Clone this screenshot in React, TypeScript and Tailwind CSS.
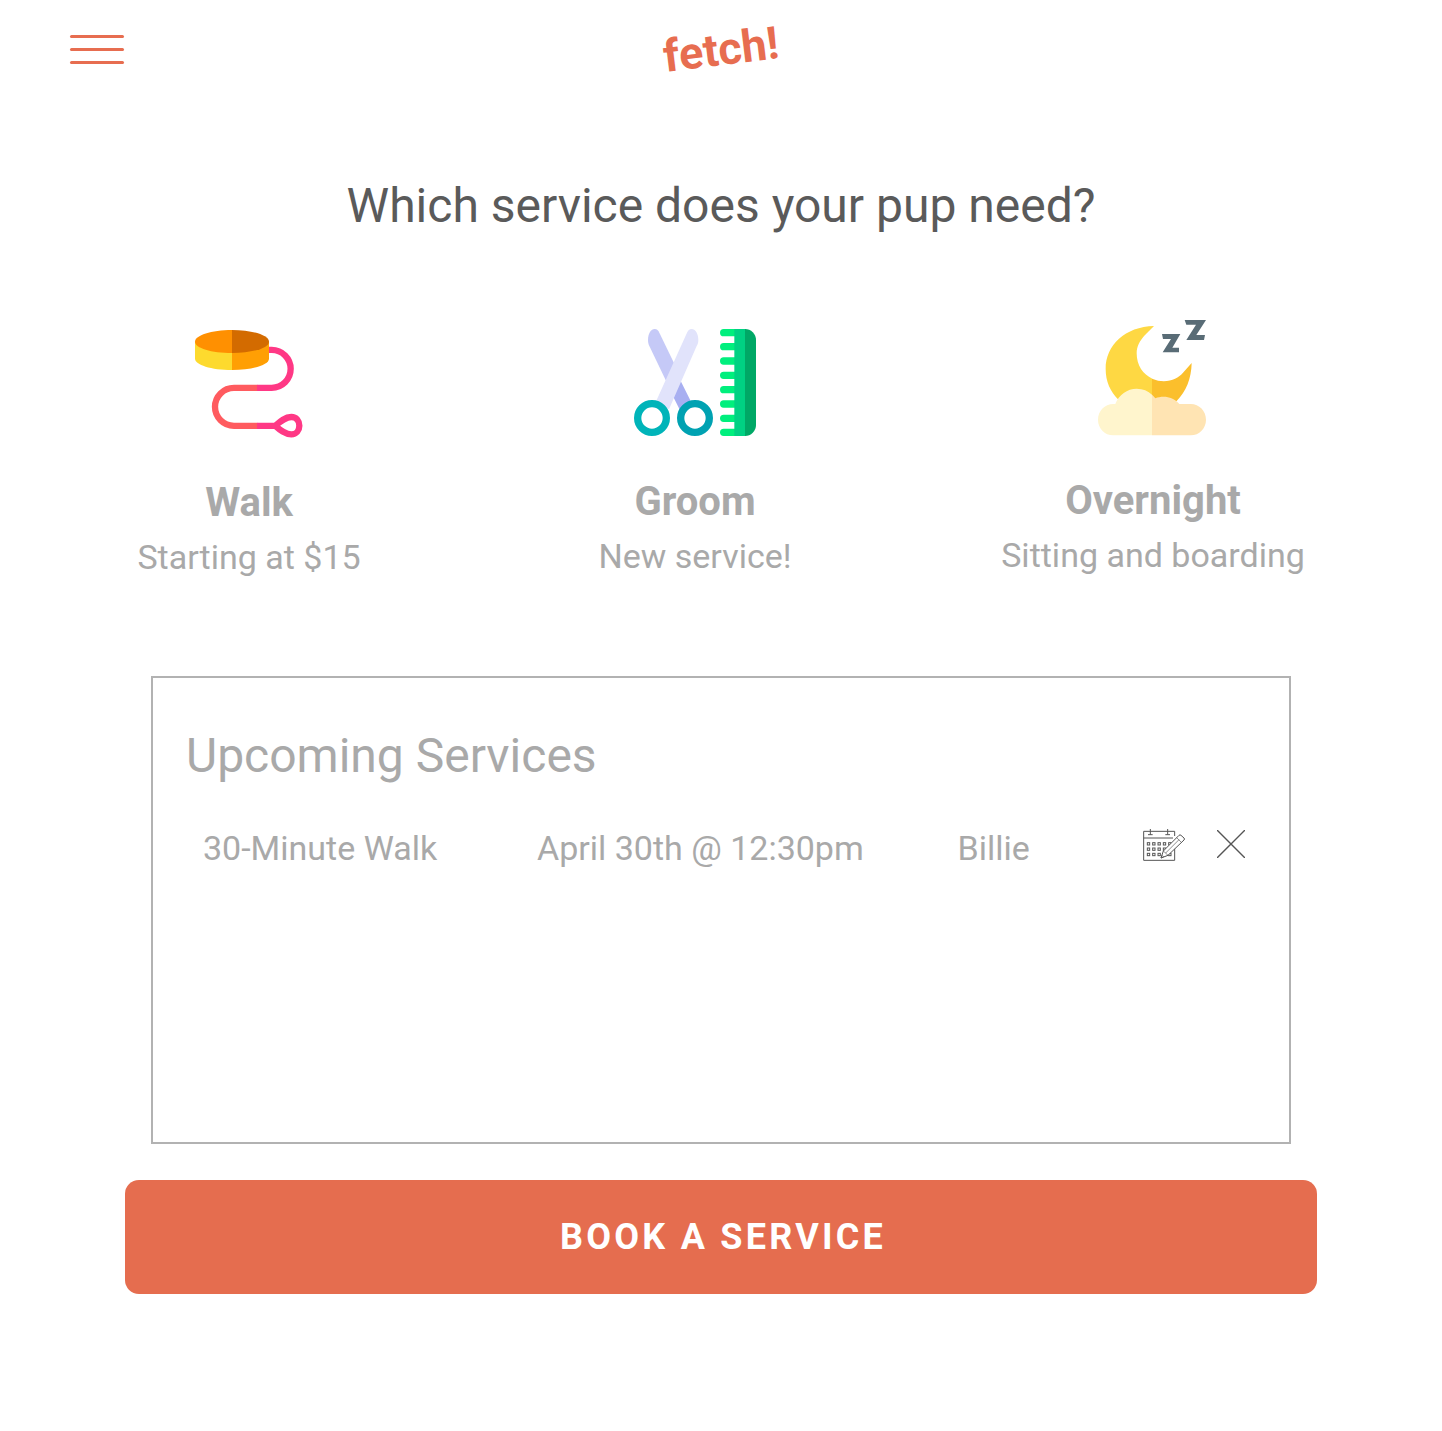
import type { ReactNode } from "react";

function LeashIcon() {
  return (
    <svg viewBox="42 15 333 354" className="h-[118px] w-[111px]" aria-hidden="true">
      <g fill="none" strokeWidth="19">
        <path d="M232 332.500H162a57 57 0 0 1 0-114h70" stroke="#ff5b5f" />
        <path d="M231 218.500h44a57 57 0 0 0 0-114h-16" stroke="#ff3885" />
        <path
          d="M231 332.500h55C300 320 315 306 334 306c15 0 24 12 24 26s-9 26-24 26c-19 0-34-13-48-25.500"
          stroke="#ff3885"
        />
      </g>
      <path d="M45 80v51c0 18 48 34 111 34l20-42-20-43z" fill="#fdda2e" />
      <path d="M267 80v51c0 18-48 34-111 34V80z" fill="#ff9f04" />
      <path d="M156 45C94 45 45 61 45 80s49 34 111 34l16-34z" fill="#ff9001" />
      <path d="M156 45c62 0 111 16 111 35s-49 34-111 34z" fill="#d36b00" />
    </svg>
  );
}

function GroomIcon() {
  const teeth = [42, 84, 127, 170, 213, 256, 299, 341];
  return (
    <svg viewBox="42 15 366 351" className="h-[117px] w-[122px]" aria-hidden="true">
      <path d="M84 74c0-18 9-32 20-32 7 0 11 5 14 11l45 93-25 51-50-104c-3-7-4-12-4-19z" fill="#c5c9f7" />
      <path d="M181 196l33 66-34 24-24-48z" fill="#a8aff1" />
      <path d="M235 74c0-18-9-32-20-32-7 0-11 5-14 11l-92 204 38 26 83-190c4-7 5-12 5-19z" fill="#e1e3fb" />
      <circle cx="96" cy="309" r="43" fill="#fff" stroke="#00b4b9" strokeWidth="22" />
      <circle cx="225" cy="309" r="43" fill="#fff" stroke="#00a2b2" strokeWidth="22" />
      {teeth.map((y) => (
        <path key={y} d={`M346 ${y}h-35a11 11 0 0 0 0 22h35z`} fill="#00ef7d" />
      ))}
      <path d="M343 42h34v321h-34z" fill="#00d183" />
      <path d="M375 42a33 33 0 0 1 33 33v255a33 33 0 0 1-33 33z" fill="#00a866" />
    </svg>
  );
}

function MoonIcon() {
  return (
    <svg viewBox="39 30 330 348" className="h-[116px] w-[110px]" aria-hidden="true">
      <path
        d="M207 48C121 50 62 105 62 177c0 38 14 67 37 91l60 30 43-30V206c-28-12-47-40-47-76 0-21 10-39 25-55z"
        fill="#fed843"
      />
      <path d="M201 206c41 17 76 2 93-18l26-29c-1 48-17 86-45 114l-40 20-34-25z" fill="#fbbf2c" />
      <path
        d="M201 376H85c-26 0-46-21-46-47s20-47 46-47h6c10-28 36-46 64-46 19 0 34 6 46 18z"
        fill="#fff5cd"
      />
      <path
        d="M201 254c4 3 7 7 10 11 24-9 53-5 72 17h34c26 0 46 21 46 47s-20 47-46 47H201z"
        fill="#ffe4b3"
      />
      <path
        d="M299 30h64l-29 45h26l-3 15h-53l29-46h-29zM231 72h55l-24 41h20v14h-49l25-40h-24z"
        fill="#596c76"
      />
    </svg>
  );
}

function CalendarIcon() {
  const columns = [52, 68, 84, 100, 116];
  const rows = [80, 96, 112];
  return (
    <svg viewBox="39 36 126 99" className="h-[33px] w-[42px]" aria-hidden="true">
      <g fill="none" stroke="#555" strokeWidth="3">
        <path d="M134 80v53H41V46h93v14M41 66h88M61 39v17M113 39v17M54 56h14M106 56h14" />
        {rows.map((y) =>
          columns.map((x) => <rect key={`${x}-${y}`} x={x} y={y} width="7" height="7" />),
        )}
      </g>
      <path
        d="M93 126l7-21 47-47q3-3 6 0l9 8q3 3 0 6l-48 46z"
        fill="#fff"
        stroke="#555"
        strokeWidth="3"
      />
      <path d="M100 105l14 13M140 65l14 14M107 111l40-40M93 126l8-3-5-5z" fill="none" stroke="#555" strokeWidth="2" />
    </svg>
  );
}

function CloseIcon() {
  return (
    <svg viewBox="0 0 28 28" className="size-7" aria-hidden="true">
      <path d="M0 0l28 28M28 0L0 28" stroke="#555" strokeWidth="1.400" />
    </svg>
  );
}

type Service = { name: string; note: string; icon: ReactNode };

const services: Service[] = [
  { name: "Walk", note: "Starting at $15", icon: <LeashIcon /> },
  { name: "Groom", note: "New service!", icon: <GroomIcon /> },
  { name: "Overnight", note: "Sitting and boarding", icon: <MoonIcon /> },
];

const bookings = [{ service: "30-Minute Walk", time: "April 30th @ 12:30pm", pup: "Billie" }];

export default function App() {
  return (
    <div className="min-h-screen bg-white pb-12 font-['Roboto',sans-serif] text-[#a9a9a9]">
      <header className="grid h-[98px] grid-cols-3 items-center px-[70px]">
        <button type="button" aria-label="Open menu" className="flex w-[54px] flex-col gap-[10px]">
          <span className="h-[3px] rounded-full bg-[#e76d50]" />
          <span className="h-[3px] rounded-full bg-[#e76d50]" />
          <span className="h-[3px] rounded-full bg-[#e76d50]" />
        </button>
        <a href="#home" className="-rotate-7 justify-self-center text-[45px] leading-none font-bold text-[#e76d50]">
          fetch!
        </a>
      </header>

      <main>
        <h1 className="mt-20 text-center text-[48px] leading-14 text-[#5a5a5a]">
          Which service does your pup need?
        </h1>

        <section
          aria-label="Services"
          className="mt-[86px] grid grid-cols-[446fr_446fr_470fr] items-start pr-[54px] pl-[26px]"
        >
          {services.map(({ name, note, icon }) => (
            <button key={name} type="button" className="flex flex-col items-center">
              {icon}
              <span className="mt-[41px] text-[40px] leading-12 font-bold">{name}</span>
              <span className="mt-[10px] text-[34px] leading-10">{note}</span>
            </button>
          ))}
        </section>

        <section
          aria-labelledby="upcoming"
          className="mx-[151px] mt-[99px] min-h-[468px] border-2 border-[#b2b2b2] px-[33px] pt-[50px]"
        >
          <h2 id="upcoming" className="text-[48px] leading-14">
            Upcoming Services
          </h2>
          <table className="mt-8 w-full table-fixed text-left text-[34px] leading-[64px]">
            <colgroup>
              <col className="w-[32.8%]" />
              <col className="w-[39.3%]" />
              <col />
              <col className="w-[113px]" />
            </colgroup>
            <tbody>
              {bookings.map(({ service, time, pup }) => (
                <tr key={service}>
                  <th scope="row" className="pl-[17px] font-normal whitespace-nowrap">{service}</th>
                  <td className="whitespace-nowrap">{time}</td>
                  <td>{pup}</td>
                  <td>
                    <div className="flex items-center gap-8 pb-2">
                      <button type="button" aria-label="Reschedule">
                        <CalendarIcon />
                      </button>
                      <button type="button" aria-label="Cancel">
                        <CloseIcon />
                      </button>
                    </div>
                  </td>
                </tr>
              ))}
            </tbody>
          </table>
        </section>

        <div className="mt-9 px-[125px]">
          <button
            type="button"
            className="h-[114px] w-full rounded-[14px] bg-[#e56d4f] pl-1 text-[36px] font-bold tracking-[0.09em] text-white"
          >
            BOOK A SERVICE
          </button>
        </div>
      </main>
    </div>
  );
}
